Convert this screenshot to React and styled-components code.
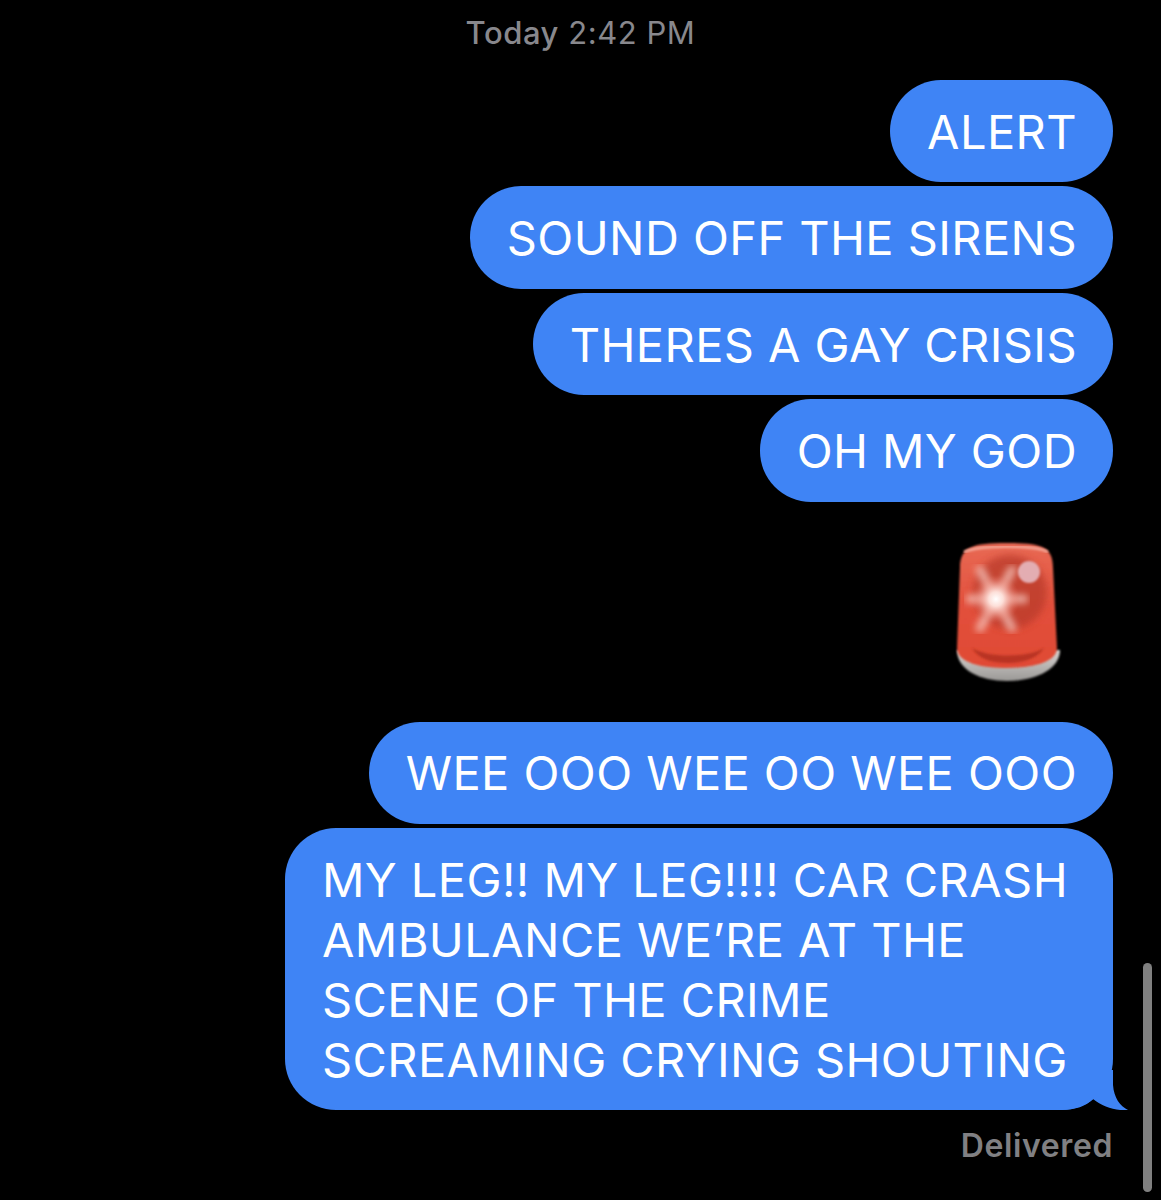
import React from 'react'
import styled, { createGlobalStyle } from 'styled-components'

const Global = createGlobalStyle`
  html, body { margin: 0; padding: 0; background: #000; }
`

const Page = styled.div`
  position: relative;
  height: 1200px;
  overflow: hidden;
  box-sizing: border-box;
  padding: 15px 48px 0 0;
  background: #000;
  font-family: Inter, "Noto Sans", "Liberation Sans", sans-serif;
  display: flex;
  flex-direction: column;
  align-items: flex-end;
`

const Stamp = styled.div`
  align-self: flex-start;
  width: 1161px;
  text-align: center;
  font-size: 31px;
  line-height: 36px;
  letter-spacing: 0.55px;
  color: #88888d;
  margin-bottom: 29px;
  b { font-weight: 500; }
`

const Thread = styled.div`
  display: flex;
  flex-direction: column;
  align-items: flex-end;
  gap: 4px;
`

const Bubble = styled.div`
  position: relative;
  isolation: isolate;
  padding: 21.8px ${(p) => (p.$wrapped ? 45 : 36)}px 20.6px 37px;
  border-radius: 51px;
  background: #3f84f5;
  color: #fff;
  font-size: 47px;
  line-height: 60px;
  letter-spacing: 0.42px;
  white-space: nowrap;
`

const Tail = styled.svg`
  position: absolute;
  z-index: -1;
  right: -15px;
  bottom: 0;
  width: 68px;
  height: 40px;
`

const Siren = styled.svg`
  display: block;
  width: 108px;
  height: 144px;
  margin: 38px 51px 38px 0;
`

const Status = styled.div`
  margin-top: 18px;
  font-size: 32px;
  line-height: 36px;
  letter-spacing: 0.6px;
  font-weight: 600;
  color: #808083;
`

const Scrollbar = styled.div`
  position: absolute;
  left: 1143px;
  top: 963px;
  width: 9px;
  height: 229px;
  border-radius: 5px;
  background: #808080;
`

const SirenIcon = () => (
  <Siren viewBox="34 20 108 144">
    <defs>
      <linearGradient id="dome" x1="0" y1="0" x2="0" y2="1">
        <stop offset="0" stopColor="#e86a55" />
        <stop offset="0.5" stopColor="#e2503c" />
        <stop offset="1" stopColor="#e04a34" />
      </linearGradient>
      <linearGradient id="base" x1="0" y1="0" x2="0" y2="1">
        <stop offset="0" stopColor="#d8d5d2" />
        <stop offset="1" stopColor="#9a9896" />
      </linearGradient>
      <radialGradient id="glow">
        <stop offset="0" stopColor="#fff" />
        <stop offset="0.3" stopColor="#ffe6e0" stopOpacity="0.9" />
        <stop offset="1" stopColor="#f0705f" stopOpacity="0" />
      </radialGradient>
      <filter id="soft"><feGaussianBlur stdDeviation="3.5" /></filter>
      <filter id="softer"><feGaussianBlur stdDeviation="1" /></filter>
    </defs>
    <path d="M37 130 C37 150 60 161 87 161 C114 161 140 150 140 130 Z" fill="url(#base)" filter="url(#softer)" />
    <path d="M40 48 C40 27 52 23 87 23 C122 23 133 27 133 48 L137 128 C137 143 110 148 87 148 C62 148 37 143 37 128 Z" fill="url(#dome)" filter="url(#softer)" />
    <path d="M52 128 C68 138 108 138 124 128 C118 138 104 143 87 143 C70 143 58 138 52 128 Z" fill="#a92c1e" opacity="0.7" filter="url(#softer)" />
    <path d="M44 32 C60 25 115 25 128 32" stroke="#f4a898" strokeWidth="2.5" fill="none" filter="url(#softer)" />
    <circle cx="90" cy="72" r="37" fill="#b93a2c" opacity="0.75" filter="url(#soft)" />
    <ellipse cx="109" cy="52" rx="11" ry="11" fill="#e3adb2" filter="url(#softer)" />
    <g stroke="#f6c6bd" strokeWidth="9" strokeLinecap="round" opacity="0.75" filter="url(#soft)">
      <path d="M60 50 L92 108" />
      <path d="M92 50 L60 108" />
      <path d="M50 79 L104 79" />
    </g>
    <circle cx="76" cy="79" r="24" fill="url(#glow)" />
  </Siren>
)

export default function App() {
  return (
    <Page>
      <Global />
      <Stamp><b>Today</b> 2:42 PM</Stamp>
      <Thread>
        <Bubble>ALERT</Bubble>
        <Bubble>SOUND OFF THE SIRENS</Bubble>
        <Bubble>THERES A GAY CRISIS</Bubble>
        <Bubble>OH MY GOD</Bubble>
      </Thread>
      <SirenIcon />
      <Thread>
        <Bubble>WEE OOO WEE OO WEE OOO</Bubble>
        <Bubble $wrapped>
          MY LEG!! MY LEG!!!! CAR CRASH<br />
          AMBULANCE WE’RE AT THE<br />
          SCENE OF THE CRIME<br />
          SCREAMING CRYING SHOUTING
          <Tail viewBox="0 0 68 40">
            <path d="M0 0 L53 0 L53 15 C54 28 60 36 68 40 C55 41 43 37 33 29 C26 36 16 40 0 40 Z" fill="#3f84f5" />
          </Tail>
        </Bubble>
      </Thread>
      <Status>Delivered</Status>
      <Scrollbar />
    </Page>
  )
}
